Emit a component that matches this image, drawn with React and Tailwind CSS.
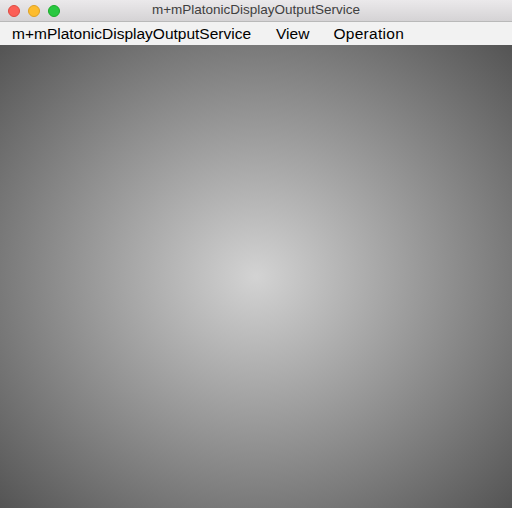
export default function App() {
  return (
    <div className="w-[512px] h-[508px] flex flex-col overflow-hidden bg-white" style={{ fontFamily: '"Liberation Sans", Arial, sans-serif' }}>
      <div className="relative h-[22px] flex items-center justify-center bg-[linear-gradient(#ebe9eb,#d5d3d5)] border-b border-[#b9b9b9] shrink-0">
        <div className="absolute left-[8px] top-[5px] flex gap-[8px]">
          <div className="w-[12px] h-[12px] rounded-full bg-[#fc5f57] border border-[#de4a41]" />
          <div className="w-[12px] h-[12px] rounded-full bg-[#fdbc2e] border border-[#dea123]" />
          <div className="w-[12px] h-[12px] rounded-full bg-[#28c840] border border-[#1aab29]" />
        </div>
        <span className="text-[13.5px] text-[#404040]">m+mPlatonicDisplayOutputService</span>
      </div>
      <div className="h-[23px] flex items-center bg-[#f2f2f2] shrink-0 text-[15.5px] text-black pl-[12px]">
        <span>m+mPlatonicDisplayOutputService</span>
        <span className="ml-[25px]">View</span>
        <span className="ml-[24px] tracking-[0.3px]">Operation</span>
      </div>
      <div className="flex-1 bg-[radial-gradient(ellipse_at_center,#d3d3d3_0%,#545454_100%)]" />
    </div>
  );
}
